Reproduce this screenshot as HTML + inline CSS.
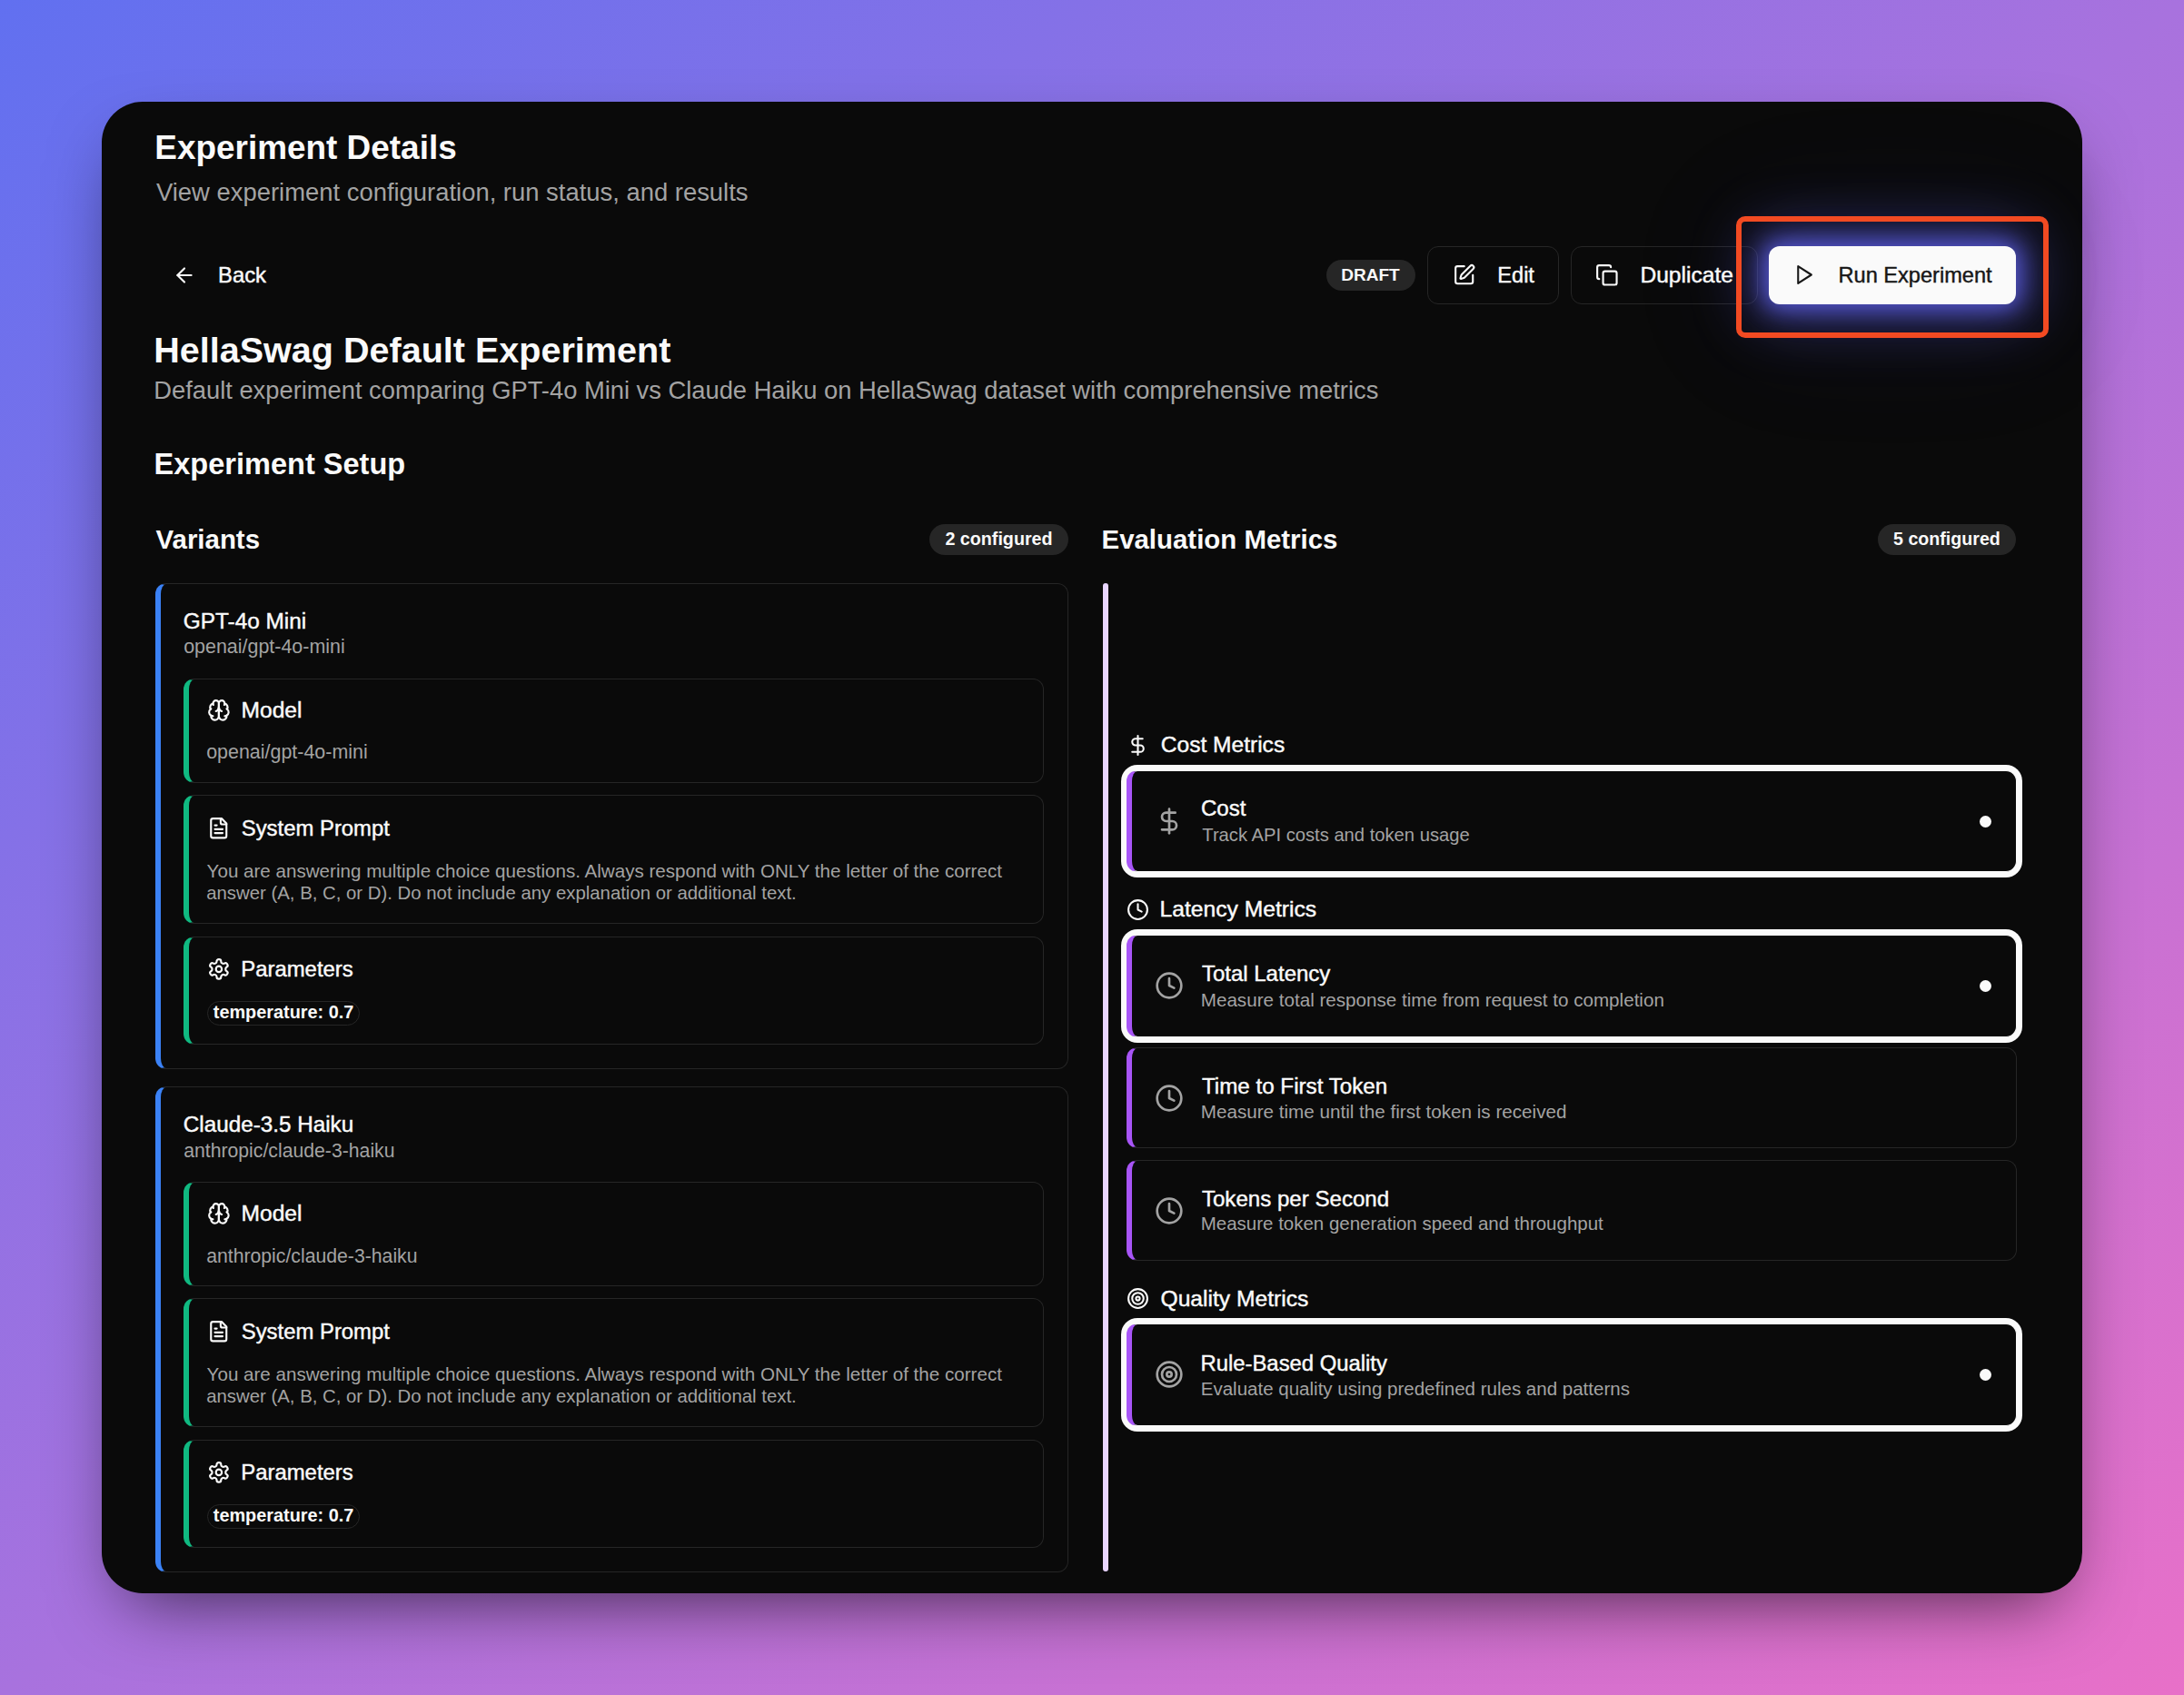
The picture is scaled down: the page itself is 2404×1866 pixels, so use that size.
<!DOCTYPE html>
<html><head><meta charset="utf-8">
<style>
html,body{margin:0;padding:0;width:2404px;height:1866px;overflow:hidden}
body{background:linear-gradient(to bottom right,#6170f0 0%,#a872de 50%,#e870c8 100%);font-family:"Liberation Sans",sans-serif;position:relative}
.win{position:absolute;left:112px;top:112px;width:2180px;height:1642px;border-radius:45px;background:#0a0a0a;box-shadow:0 32px 80px -27px rgba(0,0,0,.68)}
.a{position:absolute;box-sizing:border-box}
.t{position:absolute;white-space:nowrap}
.card{position:absolute;box-sizing:border-box;border:1.5px solid #262626;border-radius:12px;background:#0a0a0a}
.pill{position:absolute;background:#262626;border-radius:999px}
.ic{position:absolute;fill:none;stroke-linecap:round;stroke-linejoin:round}
</style></head><body>
<div class="win"></div>

<!-- back button faint bg -->
<svg class="ic" style="left:189.6px;top:289.5px;width:26px;height:26px" viewBox="0 0 24 24" stroke="#fafafa" stroke-width="2"><path d="m12 19-7-7 7-7"/><path d="M19 12H5"/></svg>

<!-- header actions -->
<div class="pill" style="left:1460px;top:286px;width:98px;height:34px"></div>
<div class="card" style="left:1571px;top:271px;width:145px;height:64px"></div>
<svg class="ic" style="left:1598.7px;top:289.7px;width:25.4px;height:25.4px" viewBox="0 0 24 24" stroke="#fafafa" stroke-width="2"><path d="M12 3H5a2 2 0 0 0-2 2v14a2 2 0 0 0 2 2h14a2 2 0 0 0 2-2v-7"/><path d="M18.375 2.625a1 1 0 0 1 3 3l-9.013 9.014a2 2 0 0 1-.853.505l-2.873.84a.5.5 0 0 1-.62-.62l.84-2.873a2 2 0 0 1 .506-.852z"/></svg>
<div class="card" style="left:1729px;top:271px;width:206px;height:64px"></div>
<svg class="ic" style="left:1756.1px;top:289.9px;width:25.7px;height:25.7px" viewBox="0 0 24 24" stroke="#fafafa" stroke-width="2"><rect width="14" height="14" x="8" y="8" rx="2" ry="2"/><path d="M4 16c-1.1 0-2-.9-2-2V4c0-1.1.9-2 2-2h10c1.1 0 2 .9 2 2"/></svg>

<!-- run experiment -->
<div class="a" style="left:1947px;top:271px;width:272px;height:64px;border-radius:12px;background:#fafafa;box-shadow:0 0 26px 6px rgba(95,98,235,.85),0 0 64px 20px rgba(90,94,225,.42),0 0 140px 40px rgba(80,80,200,.08)"></div>
<svg class="ic" style="left:1973px;top:290px;width:25px;height:25px" viewBox="0 0 24 24" stroke="#171717" stroke-width="2"><polygon points="6 3 20 12 6 21 6 3"/></svg>
<div class="a" style="left:1911px;top:238px;width:344px;height:134px;border:6.5px solid #f24a22;border-radius:10px"></div>

<!-- section badges -->
<div class="pill" style="left:1023px;top:577px;width:153px;height:34px"></div>
<div class="pill" style="left:2067px;top:577px;width:152px;height:34px"></div>

<div class="card" style="left:171px;top:642px;width:1005px;height:535px;border-left:6px solid #3b82f6"></div>
<div class="card" style="left:202px;top:746.5px;width:947px;height:115.5px;border-left:6px solid #10b981"></div>
<svg class="ic" style="left:227.8px;top:768.9px;width:25.8px;height:25.8px" viewBox="0 0 24 24" stroke="#fafafa" stroke-width="2"><path d="M12 5a3 3 0 1 0-5.997.125 4 4 0 0 0-2.526 5.77 4 4 0 0 0 .556 6.588A4 4 0 1 0 12 18Z"/><path d="M12 5a3 3 0 1 1 5.997.125 4 4 0 0 1 2.526 5.77 4 4 0 0 1-.556 6.588A4 4 0 1 1 12 18Z"/><path d="M15 13a4.5 4.5 0 0 1-3-4 4.5 4.5 0 0 1-3 4"/><path d="M17.599 6.5a3 3 0 0 0 .399-1.375"/><path d="M6.003 5.125A3 3 0 0 0 6.401 6.5"/><path d="M3.477 10.896a4 4 0 0 1 .585-.396"/><path d="M19.938 10.5a4 4 0 0 1 .585.396"/><path d="M6 18a4 4 0 0 1-1.967-.516"/><path d="M19.967 17.484A4 4 0 0 1 18 18"/></svg>
<div class="card" style="left:202px;top:875.4px;width:947px;height:141.60000000000002px;border-left:6px solid #10b981"></div>
<svg class="ic" style="left:227.9px;top:899.0px;width:25.5px;height:25.5px" viewBox="0 0 24 24" stroke="#fafafa" stroke-width="2"><path d="M15 2H6a2 2 0 0 0-2 2v16a2 2 0 0 0 2 2h12a2 2 0 0 0 2-2V7Z"/><path d="M14 2v4a2 2 0 0 0 2 2h4"/><path d="M10 9H8"/><path d="M16 13H8"/><path d="M16 17H8"/></svg>
<div class="card" style="left:202px;top:1031.4px;width:947px;height:118.59999999999991px;border-left:6px solid #10b981"></div>
<svg class="ic" style="left:227.7px;top:1053.8px;width:25.8px;height:25.8px" viewBox="0 0 24 24" stroke="#fafafa" stroke-width="2"><path d="M12.22 2h-.44a2 2 0 0 0-2 2v.18a2 2 0 0 1-1 1.73l-.43.25a2 2 0 0 1-2 0l-.15-.08a2 2 0 0 0-2.73.73l-.22.38a2 2 0 0 0 .73 2.73l.15.1a2 2 0 0 1 1 1.72v.51a2 2 0 0 1-1 1.74l-.15.09a2 2 0 0 0-.73 2.73l.22.38a2 2 0 0 0 2.73.73l.15-.08a2 2 0 0 1 2 0l.43.25a2 2 0 0 1 1 1.73V20a2 2 0 0 0 2 2h.44a2 2 0 0 0 2-2v-.18a2 2 0 0 1 1-1.73l.43-.25a2 2 0 0 1 2 0l.15.08a2 2 0 0 0 2.73-.73l.22-.39a2 2 0 0 0-.73-2.73l-.15-.08a2 2 0 0 1-1-1.74v-.5a2 2 0 0 1 1-1.74l.15-.09a2 2 0 0 0 .73-2.73l-.22-.38a2 2 0 0 0-2.73-.73l-.15.08a2 2 0 0 1-2 0l-.43-.25a2 2 0 0 1-1-1.73V4a2 2 0 0 0-2-2z"/><circle cx="12" cy="12" r="3"/></svg>
<div class="a" style="left:228px;top:1102.4px;width:168px;height:27px;border:1.5px solid #262626;border-radius:999px"></div>
<div class="card" style="left:171px;top:1196px;width:1005px;height:535px;border-left:6px solid #3b82f6"></div>
<div class="card" style="left:202px;top:1300.5px;width:947px;height:115.5px;border-left:6px solid #10b981"></div>
<svg class="ic" style="left:227.8px;top:1322.9px;width:25.8px;height:25.8px" viewBox="0 0 24 24" stroke="#fafafa" stroke-width="2"><path d="M12 5a3 3 0 1 0-5.997.125 4 4 0 0 0-2.526 5.77 4 4 0 0 0 .556 6.588A4 4 0 1 0 12 18Z"/><path d="M12 5a3 3 0 1 1 5.997.125 4 4 0 0 1 2.526 5.77 4 4 0 0 1-.556 6.588A4 4 0 1 1 12 18Z"/><path d="M15 13a4.5 4.5 0 0 1-3-4 4.5 4.5 0 0 1-3 4"/><path d="M17.599 6.5a3 3 0 0 0 .399-1.375"/><path d="M6.003 5.125A3 3 0 0 0 6.401 6.5"/><path d="M3.477 10.896a4 4 0 0 1 .585-.396"/><path d="M19.938 10.5a4 4 0 0 1 .585.396"/><path d="M6 18a4 4 0 0 1-1.967-.516"/><path d="M19.967 17.484A4 4 0 0 1 18 18"/></svg>
<div class="card" style="left:202px;top:1429.4px;width:947px;height:141.5999999999999px;border-left:6px solid #10b981"></div>
<svg class="ic" style="left:227.9px;top:1453.0px;width:25.5px;height:25.5px" viewBox="0 0 24 24" stroke="#fafafa" stroke-width="2"><path d="M15 2H6a2 2 0 0 0-2 2v16a2 2 0 0 0 2 2h12a2 2 0 0 0 2-2V7Z"/><path d="M14 2v4a2 2 0 0 0 2 2h4"/><path d="M10 9H8"/><path d="M16 13H8"/><path d="M16 17H8"/></svg>
<div class="card" style="left:202px;top:1585.4px;width:947px;height:118.59999999999991px;border-left:6px solid #10b981"></div>
<svg class="ic" style="left:227.7px;top:1607.8px;width:25.8px;height:25.8px" viewBox="0 0 24 24" stroke="#fafafa" stroke-width="2"><path d="M12.22 2h-.44a2 2 0 0 0-2 2v.18a2 2 0 0 1-1 1.73l-.43.25a2 2 0 0 1-2 0l-.15-.08a2 2 0 0 0-2.73.73l-.22.38a2 2 0 0 0 .73 2.73l.15.1a2 2 0 0 1 1 1.72v.51a2 2 0 0 1-1 1.74l-.15.09a2 2 0 0 0-.73 2.73l.22.38a2 2 0 0 0 2.73.73l.15-.08a2 2 0 0 1 2 0l.43.25a2 2 0 0 1 1 1.73V20a2 2 0 0 0 2 2h.44a2 2 0 0 0 2-2v-.18a2 2 0 0 1 1-1.73l.43-.25a2 2 0 0 1 2 0l.15.08a2 2 0 0 0 2.73-.73l.22-.39a2 2 0 0 0-.73-2.73l-.15-.08a2 2 0 0 1-1-1.74v-.5a2 2 0 0 1 1-1.74l.15-.09a2 2 0 0 0 .73-2.73l-.22-.38a2 2 0 0 0-2.73-.73l-.15.08a2 2 0 0 1-2 0l-.43-.25a2 2 0 0 1-1-1.73V4a2 2 0 0 0-2-2z"/><circle cx="12" cy="12" r="3"/></svg>
<div class="a" style="left:228px;top:1656.4px;width:168px;height:27px;border:1.5px solid #262626;border-radius:999px"></div>

<!-- metrics column -->
<div class="a" style="left:1214px;top:642px;width:6px;height:1088px;border-radius:3px;background:#e9d5ff"></div>
<svg class="ic" style="left:1240.0px;top:807.8px;width:25px;height:25px" viewBox="0 0 24 24" stroke="#fafafa" stroke-width="2"><line x1="12" x2="12" y1="2" y2="22"/><path d="M17 5H9.5a3.5 3.5 0 0 0 0 7h5a3.5 3.5 0 0 1 0 7H6"/></svg>
<div class="card" style="left:1240px;top:848px;width:980px;height:111.5px;border-left:6px solid #a855f7;border-color:#fafafa;border-left-color:#a855f7;box-shadow:0 0 0 6px #fafafa"></div>
<svg class="ic" style="left:1271.0px;top:888.0px;width:32px;height:32px" viewBox="0 0 24 24" stroke="#a3a3a3" stroke-width="2"><line x1="12" x2="12" y1="2" y2="22"/><path d="M17 5H9.5a3.5 3.5 0 0 0 0 7h5a3.5 3.5 0 0 1 0 7H6"/></svg>
<div class="a" style="left:2179px;top:897.5px;width:13px;height:13px;border-radius:50%;background:#fafafa"></div>
<svg class="ic" style="left:1240.0px;top:988.7px;width:25px;height:25px" viewBox="0 0 24 24" stroke="#fafafa" stroke-width="2"><circle cx="12" cy="12" r="10"/><polyline points="12 6 12 12 16 14"/></svg>
<div class="card" style="left:1240px;top:1029px;width:980px;height:112.59999999999991px;border-left:6px solid #a855f7;border-color:#fafafa;border-left-color:#a855f7;box-shadow:0 0 0 6px #fafafa"></div>
<svg class="ic" style="left:1271.0px;top:1069.0px;width:32px;height:32px" viewBox="0 0 24 24" stroke="#a3a3a3" stroke-width="2"><circle cx="12" cy="12" r="10"/><polyline points="12 6 12 12 16 14"/></svg>
<div class="a" style="left:2179px;top:1078.8px;width:13px;height:13px;border-radius:50%;background:#fafafa"></div>
<div class="card" style="left:1240px;top:1153px;width:980px;height:111px;border-left:6px solid #a855f7"></div>
<svg class="ic" style="left:1271.0px;top:1192.5px;width:32px;height:32px" viewBox="0 0 24 24" stroke="#a3a3a3" stroke-width="2"><circle cx="12" cy="12" r="10"/><polyline points="12 6 12 12 16 14"/></svg>
<div class="card" style="left:1240px;top:1277px;width:980px;height:111px;border-left:6px solid #a855f7"></div>
<svg class="ic" style="left:1271.0px;top:1316.5px;width:32px;height:32px" viewBox="0 0 24 24" stroke="#a3a3a3" stroke-width="2"><circle cx="12" cy="12" r="10"/><polyline points="12 6 12 12 16 14"/></svg>
<svg class="ic" style="left:1240.0px;top:1416.8px;width:25px;height:25px" viewBox="0 0 24 24" stroke="#fafafa" stroke-width="2"><circle cx="12" cy="12" r="10"/><circle cx="12" cy="12" r="6"/><circle cx="12" cy="12" r="2"/></svg>
<div class="card" style="left:1240px;top:1457px;width:980px;height:112.59999999999991px;border-left:6px solid #a855f7;border-color:#fafafa;border-left-color:#a855f7;box-shadow:0 0 0 6px #fafafa"></div>
<svg class="ic" style="left:1271.0px;top:1497.3px;width:32px;height:32px" viewBox="0 0 24 24" stroke="#a3a3a3" stroke-width="2"><circle cx="12" cy="12" r="10"/><circle cx="12" cy="12" r="6"/><circle cx="12" cy="12" r="2"/></svg>
<div class="a" style="left:2179px;top:1506.8px;width:13px;height:13px;border-radius:50%;background:#fafafa"></div>

<div class="t" style="left:170.28px;top:140.27px;font-size:36.94px;line-height:46px;font-weight:bold;color:#fafafa;">Experiment Details</div>
<div class="t" style="left:172.00px;top:195.00px;font-size:27.42px;line-height:34px;font-weight:normal;color:#a3a3a3;">View experiment configuration, run status, and results</div>
<div class="t" style="left:239.99px;top:287.66px;font-size:23.83px;line-height:30px;font-weight:normal;color:#fafafa;-webkit-text-stroke:0.43px #fafafa;">Back</div>
<div class="t" style="left:169.13px;top:361.36px;font-size:39.55px;line-height:49px;font-weight:bold;color:#fafafa;">HellaSwag Default Experiment</div>
<div class="t" style="left:169.31px;top:413.04px;font-size:27.32px;line-height:34px;font-weight:normal;color:#a3a3a3;">Default experiment comparing GPT-4o Mini vs Claude Haiku on HellaSwag dataset with comprehensive metrics</div>
<div class="t" style="left:169.55px;top:490.71px;font-size:32.54px;line-height:41px;font-weight:bold;color:#fafafa;">Experiment Setup</div>
<div class="t" style="left:171.50px;top:575.40px;font-size:29.44px;line-height:37px;font-weight:bold;color:#fafafa;">Variants</div>
<div class="t" style="left:1212.54px;top:575.21px;font-size:29.41px;line-height:37px;font-weight:bold;color:#fafafa;">Evaluation Metrics</div>
<div class="t" style="left:1040.41px;top:580.60px;font-size:19.71px;line-height:25px;font-weight:bold;color:#fafafa;">2 configured</div>
<div class="t" style="left:2084.01px;top:580.62px;font-size:19.65px;line-height:25px;font-weight:bold;color:#fafafa;">5 configured</div>
<div class="t" style="left:1476.16px;top:290.83px;font-size:19.05px;line-height:24px;font-weight:bold;color:#fafafa;">DRAFT</div>
<div class="t" style="left:1648.31px;top:288.65px;font-size:23.58px;line-height:29px;font-weight:normal;color:#fafafa;-webkit-text-stroke:0.42px #fafafa;">Edit</div>
<div class="t" style="left:1805.43px;top:287.30px;font-size:24.58px;line-height:31px;font-weight:normal;color:#fafafa;-webkit-text-stroke:0.44px #fafafa;">Duplicate</div>
<div class="t" style="left:2023.51px;top:287.54px;font-size:23.60px;line-height:30px;font-weight:normal;color:#171717;-webkit-text-stroke:0.42px #171717;">Run Experiment</div>
<div class="t" style="left:201.78px;top:669.36px;font-size:24.39px;line-height:30px;font-weight:normal;color:#fafafa;-webkit-text-stroke:0.44px #fafafa;">GPT-4o Mini</div>
<div class="t" style="left:202.14px;top:698.80px;font-size:21.44px;line-height:27px;font-weight:normal;color:#a3a3a3;">openai/gpt-4o-mini</div>
<div class="t" style="left:265.53px;top:766.09px;font-size:24.60px;line-height:31px;font-weight:normal;color:#fafafa;-webkit-text-stroke:0.44px #fafafa;">Model</div>
<div class="t" style="left:227.14px;top:815.00px;font-size:21.44px;line-height:27px;font-weight:normal;color:#a3a3a3;">openai/gpt-4o-mini</div>
<div class="t" style="left:265.74px;top:896.64px;font-size:23.88px;line-height:30px;font-weight:normal;color:#fafafa;-webkit-text-stroke:0.43px #fafafa;">System Prompt</div>
<div class="t" style="left:227.59px;top:945.59px;font-size:20.60px;line-height:26px;font-weight:normal;color:#a3a3a3;">You are answering multiple choice questions. Always respond with ONLY the letter of the correct</div>
<div class="t" style="left:227.18px;top:971.37px;font-size:20.38px;line-height:25px;font-weight:normal;color:#a3a3a3;">answer (A, B, C, or D). Do not include any explanation or additional text.</div>
<div class="t" style="left:265.19px;top:1051.63px;font-size:23.92px;line-height:30px;font-weight:normal;color:#fafafa;-webkit-text-stroke:0.43px #fafafa;">Parameters</div>
<div class="t" style="left:234.80px;top:1102.15px;font-size:19.86px;line-height:25px;font-weight:bold;color:#fafafa;">temperature: 0.7</div>
<div class="t" style="left:201.79px;top:1223.41px;font-size:24.26px;line-height:30px;font-weight:normal;color:#fafafa;-webkit-text-stroke:0.44px #fafafa;">Claude-3.5 Haiku</div>
<div class="t" style="left:202.15px;top:1252.87px;font-size:21.23px;line-height:27px;font-weight:normal;color:#a3a3a3;">anthropic/claude-3-haiku</div>
<div class="t" style="left:265.53px;top:1320.09px;font-size:24.60px;line-height:31px;font-weight:normal;color:#fafafa;-webkit-text-stroke:0.44px #fafafa;">Model</div>
<div class="t" style="left:227.15px;top:1369.07px;font-size:21.23px;line-height:27px;font-weight:normal;color:#a3a3a3;">anthropic/claude-3-haiku</div>
<div class="t" style="left:265.74px;top:1450.64px;font-size:23.88px;line-height:30px;font-weight:normal;color:#fafafa;-webkit-text-stroke:0.43px #fafafa;">System Prompt</div>
<div class="t" style="left:227.59px;top:1499.59px;font-size:20.60px;line-height:26px;font-weight:normal;color:#a3a3a3;">You are answering multiple choice questions. Always respond with ONLY the letter of the correct</div>
<div class="t" style="left:227.18px;top:1525.37px;font-size:20.38px;line-height:25px;font-weight:normal;color:#a3a3a3;">answer (A, B, C, or D). Do not include any explanation or additional text.</div>
<div class="t" style="left:265.19px;top:1605.63px;font-size:23.92px;line-height:30px;font-weight:normal;color:#fafafa;-webkit-text-stroke:0.43px #fafafa;">Parameters</div>
<div class="t" style="left:234.80px;top:1656.15px;font-size:19.86px;line-height:25px;font-weight:bold;color:#fafafa;">temperature: 0.7</div>
<div class="t" style="left:1277.77px;top:803.80px;font-size:24.56px;line-height:31px;font-weight:normal;color:#fafafa;-webkit-text-stroke:0.44px #fafafa;">Cost Metrics</div>
<div class="t" style="left:1321.90px;top:875.07px;font-size:24.10px;line-height:30px;font-weight:normal;color:#fafafa;-webkit-text-stroke:0.43px #fafafa;">Cost</div>
<div class="t" style="left:1323.30px;top:906.73px;font-size:20.20px;line-height:25px;font-weight:normal;color:#a3a3a3;">Track API costs and token usage</div>
<div class="t" style="left:1276.53px;top:985.27px;font-size:24.65px;line-height:31px;font-weight:normal;color:#fafafa;-webkit-text-stroke:0.44px #fafafa;">Latency Metrics</div>
<div class="t" style="left:1322.92px;top:1057.20px;font-size:24.01px;line-height:30px;font-weight:normal;color:#fafafa;-webkit-text-stroke:0.43px #fafafa;">Total Latency</div>
<div class="t" style="left:1321.75px;top:1087.58px;font-size:20.63px;line-height:26px;font-weight:normal;color:#a3a3a3;">Measure total response time from request to completion</div>
<div class="t" style="left:1322.92px;top:1181.13px;font-size:24.19px;line-height:30px;font-weight:normal;color:#fafafa;-webkit-text-stroke:0.44px #fafafa;">Time to First Token</div>
<div class="t" style="left:1321.75px;top:1210.97px;font-size:20.65px;line-height:26px;font-weight:normal;color:#a3a3a3;">Measure time until the first token is received</div>
<div class="t" style="left:1322.92px;top:1304.86px;font-size:24.10px;line-height:30px;font-weight:normal;color:#fafafa;-webkit-text-stroke:0.43px #fafafa;">Tokens per Second</div>
<div class="t" style="left:1321.76px;top:1334.43px;font-size:20.49px;line-height:26px;font-weight:normal;color:#a3a3a3;">Measure token generation speed and throughput</div>
<div class="t" style="left:1277.51px;top:1413.58px;font-size:24.64px;line-height:31px;font-weight:normal;color:#fafafa;-webkit-text-stroke:0.44px #fafafa;">Quality Metrics</div>
<div class="t" style="left:1321.49px;top:1485.85px;font-size:23.85px;line-height:30px;font-weight:normal;color:#fafafa;-webkit-text-stroke:0.43px #fafafa;">Rule-Based Quality</div>
<div class="t" style="left:1321.76px;top:1516.22px;font-size:20.53px;line-height:26px;font-weight:normal;color:#a3a3a3;">Evaluate quality using predefined rules and patterns</div>
</body></html>
